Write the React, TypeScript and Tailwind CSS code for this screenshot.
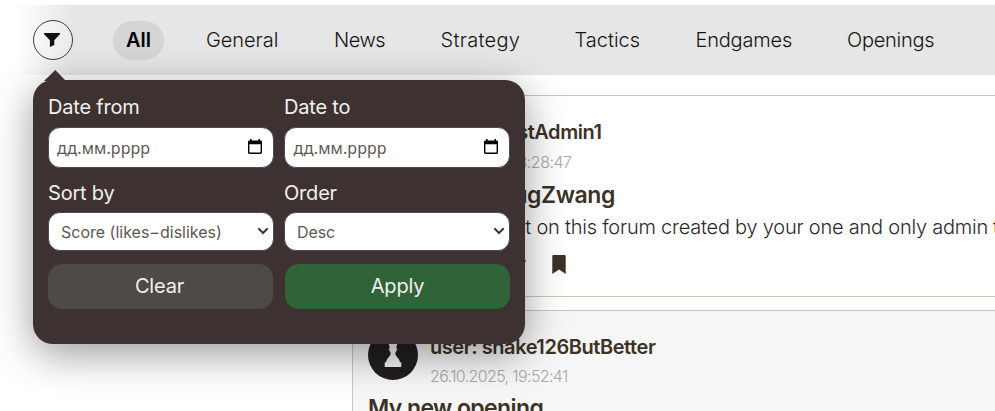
const labelCls = "h-[24px] text-[20px] leading-[24px] tracking-[-0.2px] text-[#f1f0ef]";
const fieldCls =
  "flex w-[226px] items-center justify-between rounded-[12px] border border-[#4b4a50] bg-white text-[#5f5655]";

const topics = [
  { name: "General", box: "ml-[42px] w-[74px]", text: "tracking-[-0.05px]" },
  { name: "News", box: "ml-[54px] w-[54px]", text: "tracking-[-0.5px]" },
  { name: "Strategy", box: "ml-[52.5px] w-[82px]", text: "tracking-[0.3px]" },
  { name: "Tactics", box: "ml-[52px] w-[68px]", text: "tracking-[0px]" },
  { name: "Endgames", box: "ml-[53px] w-[100px]", text: "tracking-[-0.2px]" },
  { name: "Openings", box: "ml-[51.5px] w-[90px]", text: "tracking-[-0.25px]" },
];

function Funnel() {
  return (
    <svg width="18" height="16" viewBox="0 0 18 16" className="mr-[2px]" fill="#111">
      <path d="M1.700 1h14.600c.8 0 1 .7.6 1.200L11.300 8.300v4.800L6.900 14.900V8.300L1.100 2.200C.7 1.700.9 1 1.700 1z" />
    </svg>
  );
}

function CalendarIcon() {
  return (
    <svg width="14" height="16" viewBox="0 0 14 16" className="mr-[11.5px] mb-[2px]">
      <path
        fill="#000"
        fillRule="evenodd"
        d="M2 0h1.600v1.400h6.800V0H12v1.400h.6c.8 0 1.400.6 1.400 1.400v10.800c0 .8-.6 1.400-1.400 1.400H1.400C.6 15 0 14.400 0 13.600V2.800C0 2 .6 1.400 1.400 1.400H2zM1.400 5.300v8.300h11.200V5.300z"
      />
    </svg>
  );
}

function Chevron() {
  return (
    <svg width="12" height="8" viewBox="0 0 12 8" className="mr-[4.5px] mb-[2px]">
      <path d="M1.300 1.300L6 6l4.700-4.700" fill="none" stroke="#3d3637" strokeWidth="2" />
    </svg>
  );
}

function Avatar() {
  return (
    <svg width="50" height="50" viewBox="0 0 50 50" className="shrink-0">
      <circle cx="25" cy="25" r="25" fill="#211f20" />
      <path
        fill="#f4f4f4"
        d="M25 7a5 5 0 0 1 4 8l-.8 3 1 1v1.200h-1V22h-.7v2.500c.3 1.500 2 2.600 3.200 4.500.8 1.200 1 2 1.100 3.200h1.500V37H16.700v-4.800h1.500c.1-1.200.3-2 1.100-3.200 1.200-1.900 2.900-3 3.200-4.500V22h-.7v-1.800h-1V19l1-1-.8-3A5 5 0 0 1 25 7z"
      />
    </svg>
  );
}

function FilterMenu() {
  return (
    <div className="absolute top-[80px] left-[33px] h-[264px] w-[492px] rounded-[20px] bg-[#3d3231] pt-[15px] pl-[15px] shadow-[0_10px_40px_rgba(0,0,0,0.4)]">
      <svg width="22" height="11" viewBox="0 0 22 11" className="absolute -top-[10px] left-[11px]">
        <path d="M0 11L11.300 0L22 11z" fill="#3d3231" />
      </svg>
      <div className="grid grid-cols-[226px_226px] gap-x-[10px]">
        <div>
          <div className={labelCls}>Date from</div>
          <div className={`${fieldCls} mt-[8px] h-[41px]`}>
            <span className="pl-[8px] font-['Noto_Sans','Open_Sans',sans-serif] text-[16px] tracking-[0.1px]">дд.мм.рррр</span>
            <CalendarIcon />
          </div>
          <div className={`${labelCls} mt-[13px]`}>Sort by</div>
          <div className={`${fieldCls} mt-[7px] h-[39px]`}>
            <span className="pl-[12px] text-[16px]">Score (likes−dislikes)</span>
            <Chevron />
          </div>
          <button className="mt-[13px] block h-[45px] w-[225px] rounded-[14px] bg-[#4e4a46] pr-[2px] pb-[2px] text-[20px] tracking-[-0.2px] text-[#f1f0ef]">
            Clear
          </button>
        </div>
        <div>
          <div className={labelCls}>Date to</div>
          <div className={`${fieldCls} mt-[8px] h-[41px]`}>
            <span className="pl-[8.5px] font-['Noto_Sans','Open_Sans',sans-serif] text-[16px] tracking-[0.1px]">дд.мм.рррр</span>
            <CalendarIcon />
          </div>
          <div className={`${labelCls} mt-[13px]`}>Order</div>
          <div className={`${fieldCls} mt-[7px] h-[39px]`}>
            <span className="pl-[12px] text-[16px] tracking-[-0.1px]">Desc</span>
            <Chevron />
          </div>
          <button className="mt-[13px] ml-[1px] block h-[45px] w-[225px] rounded-[14px] bg-[#306338] pb-[2px] text-[20px] tracking-[-0.2px] text-[#f1f0ef]">
            Apply
          </button>
        </div>
      </div>
    </div>
  );
}

export default function App() {
  return (
    <div className="relative h-[411px] w-full overflow-hidden bg-white pt-[5px] font-['Inter','Liberation_Sans',sans-serif]">
      <nav className="flex h-[70px] items-center bg-linear-to-r from-white from-[15px] to-[#e6e6e6] to-[72px] pl-[33px] text-[20px] font-[350] whitespace-nowrap text-[#151515]">
        <button className="flex size-[40px] shrink-0 items-center justify-center rounded-full border border-[#3c3c42] bg-white/20">
          <Funnel />
        </button>
        <div className="ml-[40px] flex h-[39px] w-[51px] shrink-0 items-center justify-center rounded-full bg-[#d5d5d5] font-semibold text-black">
          All
        </div>
        {topics.map((t) => (
          <div key={t.name} className={`shrink-0 ${t.box} ${t.text}`}>
            {t.name}
          </div>
        ))}
      </nav>

      <main className="mt-[20px] ml-[352px] w-[760px] whitespace-nowrap">
        <article className="h-[202px] border border-[#d3c3b6] bg-white pt-[12px] pl-[15px]">
          <div className="flex h-[73px]">
            <Avatar />
            <div className="w-[183.5px] pt-[11px] text-right">
              <div className="h-[26px] text-[20px] leading-[26px] font-semibold tracking-[-0.45px] text-[#3c3225]">user: testAdmin1</div>
              <div className="mt-[5px] w-[153.5px] text-[16px] leading-[24px] font-light tracking-[-0.5px] text-[#a8a8a8]">26.10.2025, 18:28:47</div>
            </div>
          </div>
          <h2 className="flex w-[247px] justify-end text-[23px] leading-[28px] font-semibold tracking-[-0.4px] text-[#3c3225]">
            Welcome to ZugZwang
          </h2>
          <div className="mt-[4px] flex text-[20px] leading-[28px] font-[350] tracking-[-0.23px] text-[#2a2a2c]">
            <p className="flex w-[620px] justify-end">This is the first post on this forum created by your one and only admin</p>
            <span className="ml-[5px]">t</span>
          </div>
          <div className="mt-[14px] flex items-start">
            <svg width="20" height="20" viewBox="0 0 20 20" className="ml-[138px]" fill="#3c3225">
              <path d="M2 5h18l-2.200 6H2z" />
            </svg>
            <svg width="14" height="19" viewBox="0 0 14 19" className="ml-[25.5px]" fill="#3c3225">
              <path d="M1.500 0h11c.7 0 1.200.5 1.200 1.200V19L7 14.600.3 19V1.200C.3.500.8 0 1.500 0z" />
            </svg>
          </div>
        </article>

        <article className="mt-[13px] h-[202px] border border-[#d3c3b6] bg-[#f6f6f6] pt-[19px] pl-[15px]">
          <div className="flex h-[64px]">
            <Avatar />
            <div className="pl-[12px]">
              <div className="mt-[4px] h-[26px] text-[20px] leading-[26px] font-semibold tracking-[-0.44px] text-[#3c3225]">user: snake126ButBetter</div>
              <div className="mt-[4px] text-[16px] leading-[24px] font-light tracking-[-0.63px] text-[#a8a8a8]">26.10.2025, 19:52:41</div>
            </div>
          </div>
          <h2 className="text-[23px] leading-[28px] font-semibold tracking-[-0.6px] text-[#3c3225]">My new opening</h2>
        </article>
      </main>

      <FilterMenu />
    </div>
  );
}
